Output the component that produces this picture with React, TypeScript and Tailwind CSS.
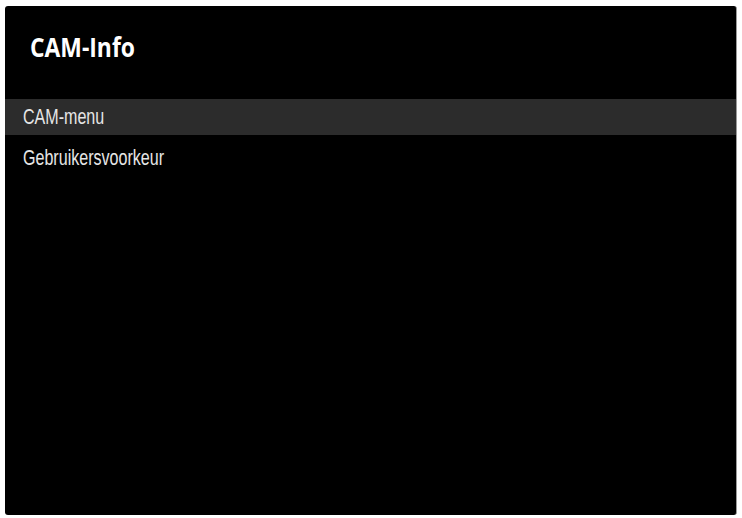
import React from "react";

const ITEMS = ["CAM-menu", "Gebruikersvoorkeur"];

const App = () => {
  const selected = 0;

  return (
    <div className="w-[742px] h-[518px] bg-white pt-[6px] pl-[5px] pr-[5px] pb-[3px]">
      <div className="h-full bg-black rounded-[3px] border-r border-[#9a9a9a] flex flex-col overflow-hidden">
        <div className="h-[93px] pl-[25px] pt-[25px]">
          <h1
            className="inline-block origin-left scale-x-[0.88] text-white text-[26px] font-bold leading-[32px]"
            style={{ fontFamily: '"Open Sans", sans-serif' }}
          >
            CAM-Info
          </h1>
        </div>
        <ul className="flex flex-col gap-[5px]">
          {ITEMS.map((item, i) => (
            <li
              key={item}
              className={`h-[36px] pl-[18px] flex items-center ${
                i === selected ? "bg-[#2c2c2c]" : ""
              }`}
            >
              <span
                className="inline-block origin-left scale-x-[0.73] text-[#e6e6e6] text-[22px] leading-none"
                style={{ fontFamily: '"Liberation Sans", Arial, sans-serif' }}
              >
                {item}
              </span>
            </li>
          ))}
        </ul>
      </div>
    </div>
  );
};

export default App;
